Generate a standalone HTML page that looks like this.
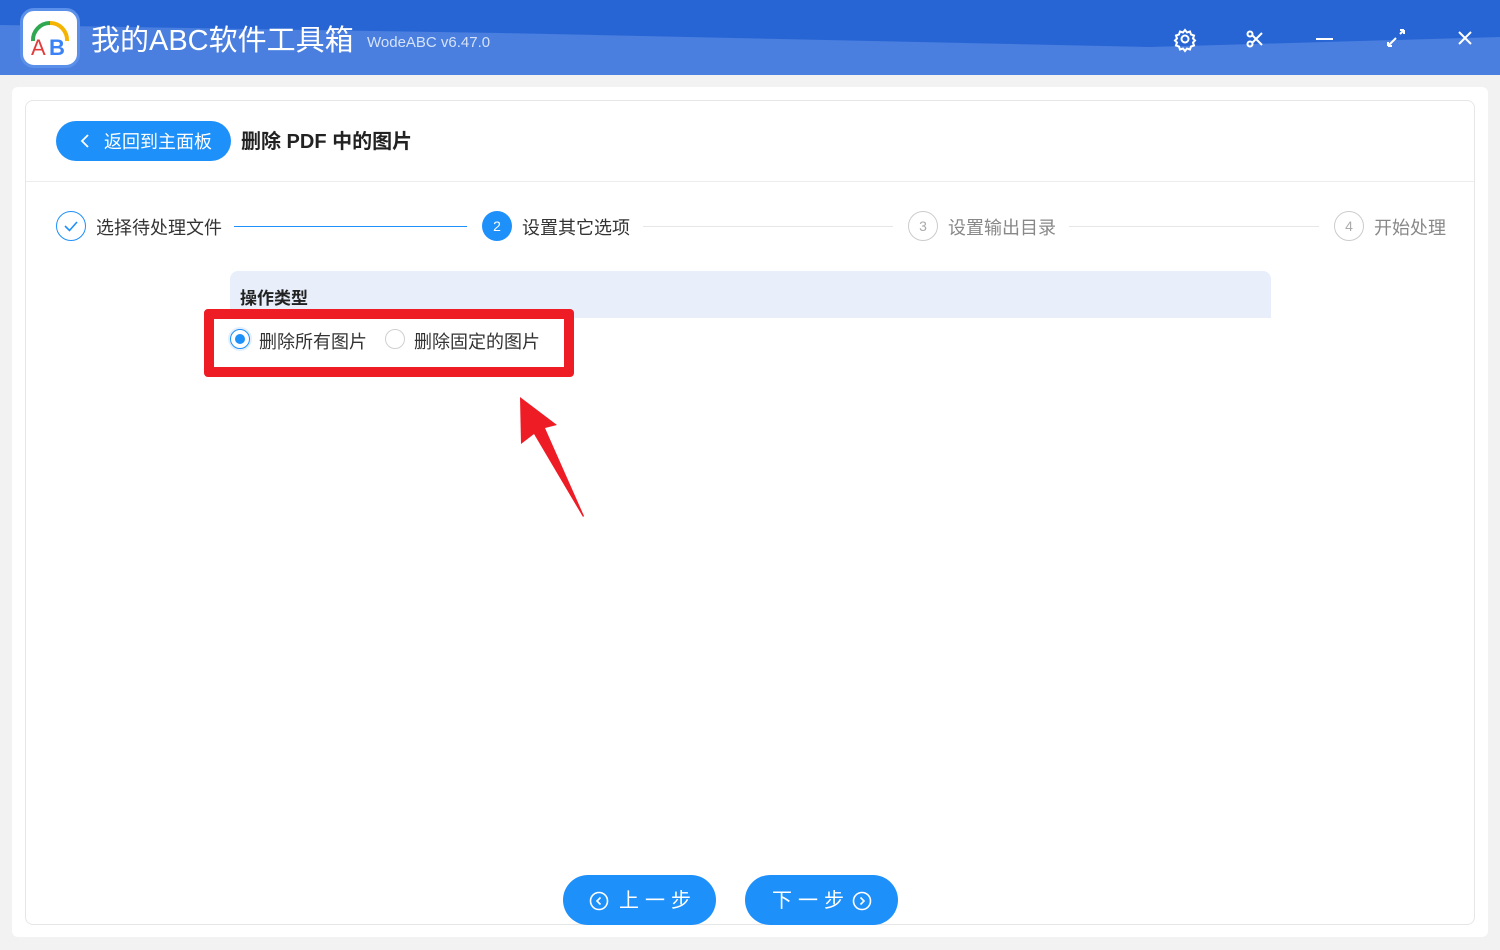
<!DOCTYPE html>
<html><head><meta charset="utf-8"><style>
*{margin:0;padding:0;box-sizing:border-box}
body{width:1500px;height:950px;overflow:hidden;background:#f2f2f2;font-family:"Liberation Sans","Noto Sans CJK SC",sans-serif;position:relative}
.hdr{position:absolute;left:0;top:0;width:1500px;height:75px;background:#4a7fdf}
.logo{position:absolute;left:20px;top:8px;width:60px;height:60px;border-radius:14px;background:#fff;border:3px solid #5a90ea}
.title{position:absolute;left:91px;top:22px;color:#fff;font-size:29px;line-height:38px}
.ver{position:absolute;left:367px;top:34px;color:#d5e2f8;font-size:15px}
.panel{position:absolute;left:12px;top:87px;width:1476px;height:850px;background:#fff;border-radius:6px}
.card{position:absolute;left:25px;top:100px;width:1450px;height:825px;border:1px solid #e6e6e6;border-radius:8px}
.back{position:absolute;left:56px;top:121px;width:175px;height:40px;border-radius:20px;background:#1e90fa;color:#fff;font-size:18px;line-height:42px;padding-left:48px}
.h1{position:absolute;left:241px;top:129px;font-size:20px;font-weight:bold;color:#222;line-height:26px}
.sep{position:absolute;left:26px;top:181px;width:1448px;height:1px;background:#ececec}
.step{position:absolute;top:213px;height:30px;font-size:18px;line-height:30px;color:#333}
.circ{position:absolute;top:211px;width:30px;height:30px;border-radius:50%;text-align:center;line-height:28px;font-size:14px}
.line{position:absolute;top:226px;height:1px}
.sec{position:absolute;left:230px;top:271px;width:1041px;height:47px;background:#e8effb;border-radius:8px 8px 0 0}
.sec span{position:absolute;left:10px;top:13px;font-size:17px;font-weight:bold;color:#222}
.opt{position:absolute;top:328px;font-size:18px;color:#333}
.red{position:absolute;left:204px;top:309px;width:370px;height:68px;border:10px solid #ee1c25;border-radius:4px}
.btn{position:absolute;top:875px;width:153px;height:50px;border-radius:25px;background:#1e90fa;color:#fff;font-size:20px;line-height:52px;letter-spacing:6px}
</style></head><body>
<div class="hdr"></div>
<svg style="position:absolute;left:0;top:0" width="1500" height="75"><polygon points="0,0 1500,0 1500,37 1150,47 500,33 0,25" fill="#2865d4"/></svg>
<div class="logo"><svg width="54" height="54" viewBox="0 0 54 54"><path d="M10 30 A17 17 0 0 1 27 12" stroke="#2fa84f" stroke-width="4" fill="none"/><path d="M27 12 A17 17 0 0 1 44 30" stroke="#f5b400" stroke-width="4" fill="none"/><text x="8" y="44" font-size="22" font-family="Liberation Sans" fill="#e23c3c">A</text><text x="26" y="44" font-size="22" font-family="Liberation Sans" font-weight="bold" fill="#3b82f6">B</text></svg></div>
<div class="title">我的ABC软件工具箱</div>
<div class="ver">WodeABC v6.47.0</div>
<svg style="position:absolute;left:1170px;top:24px" width="310" height="30" viewBox="0 0 310 30" fill="none" stroke="#fff" stroke-width="2">
<circle cx="15" cy="15" r="3.5"/><path d="M15 6 l2 2.5 3-1 1 3 3 1-1 3 2 2-2 2 1 3-3 1-1 3-3-1-2 2.5-2-2.5-3 1-1-3-3-1 1-3-2-2 2-2-1-3 3-1 1-3 3 1z"/>
<circle cx="80" cy="10" r="2.5"/><circle cx="80" cy="20" r="2.5"/><path d="M82 11 L92 21 M82 19 L92 9"/>
<path d="M146 15 H163"/>
<path d="M218 22 L226 14 M230 10 L234 6 M218 22 v-4 M218 22 h4 M234 6 v4 M234 6 h-4"/>
<path d="M289 8 L301 20 M301 8 L289 20"/></svg>
<div class="panel"></div><div class="card"></div>
<div class="back"><svg style="position:absolute;left:24px;top:13px" width="10" height="14"><path d="M8 1 L2 7 L8 13" stroke="#fff" stroke-width="1.8" fill="none"/></svg>返回到主面板</div>
<div class="h1">删除 PDF 中的图片</div>
<div class="sep"></div>
<div class="circ" style="left:56px;border:1px solid #1e90fa"><svg width="28" height="28"><path d="M8 14 L12.5 18.5 L20 10" stroke="#1e90fa" stroke-width="1.6" fill="none"/></svg></div>
<div class="step" style="left:96px">选择待处理文件</div>
<div class="line" style="left:234px;width:233px;background:#1e90fa"></div>
<div class="circ" style="left:482px;background:#1e90fa;color:#fff;line-height:30px">2</div>
<div class="step" style="left:522px">设置其它选项</div>
<div class="line" style="left:643px;width:250px;background:#e6e6e6"></div>
<div class="circ" style="left:908px;border:1px solid #ccc;color:#aaa">3</div>
<div class="step" style="left:948px;color:#888">设置输出目录</div>
<div class="line" style="left:1069px;width:250px;background:#e6e6e6"></div>
<div class="circ" style="left:1334px;border:1px solid #ccc;color:#aaa">4</div>
<div class="step" style="left:1374px;color:#888">开始处理</div>
<div class="sec"><span>操作类型</span></div>
<div style="position:absolute;left:228px;top:327px;width:24px;height:24px;border-radius:50%;background:#e3effd"></div>
<div style="position:absolute;left:230px;top:329px;width:20px;height:20px;border-radius:50%;border:1px solid #1e90fa;background:#fff"></div>
<div style="position:absolute;left:235px;top:334px;width:10px;height:10px;border-radius:50%;background:#1e90fa"></div>
<div class="opt" style="left:259px">删除所有图片</div>
<div style="position:absolute;left:385px;top:329px;width:20px;height:20px;border-radius:50%;border:1px solid #d0d0d0"></div>
<div class="opt" style="left:414px">删除固定的图片</div>
<div class="red"></div>
<svg style="position:absolute;left:500px;top:390px" width="100" height="135"><polygon points="20,7 21,54 34,44 83,127 84,126 45,38 57,35" fill="#ee1c25"/></svg>
<div class="btn" style="left:563px;padding-left:56px">上一步<svg style="position:absolute;left:26px;top:16px" width="20" height="20"><circle cx="10" cy="10" r="8.5" stroke="#fff" stroke-width="1.6" fill="none"/><path d="M11.5 6.5 L8 10 L11.5 13.5" stroke="#fff" stroke-width="1.6" fill="none"/></svg></div>
<div class="btn" style="left:745px;padding-left:27px">下一步<svg style="position:absolute;left:107px;top:16px" width="20" height="20"><circle cx="10" cy="10" r="8.5" stroke="#fff" stroke-width="1.6" fill="none"/><path d="M8.5 6.5 L12 10 L8.5 13.5" stroke="#fff" stroke-width="1.6" fill="none"/></svg></div>
</body></html>
